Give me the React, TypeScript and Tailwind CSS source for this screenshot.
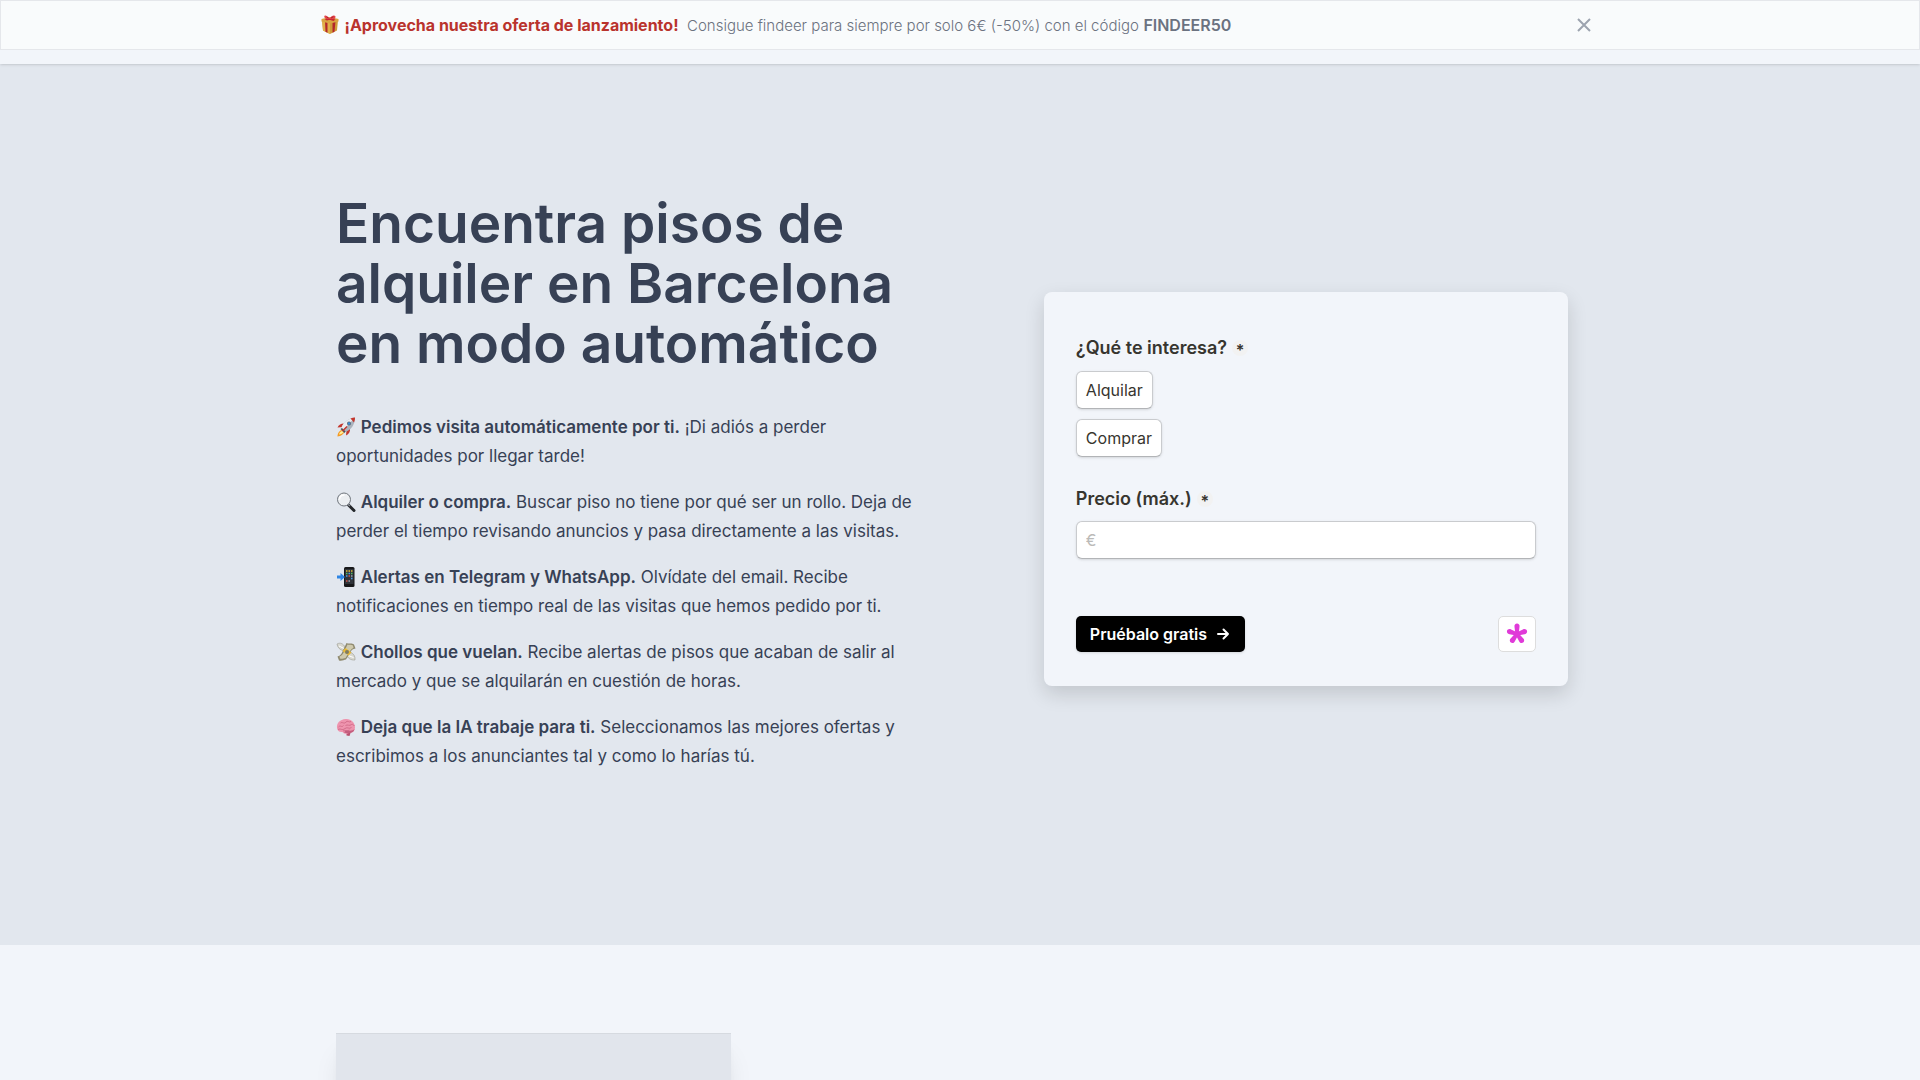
import type { ReactNode } from "react";

function Emoji({ label, children }: { label: string; children: ReactNode }) {
  return (
    <svg role="img" aria-label={label} viewBox="0 0 38 40" className="inline-block size-5 align-[-4px]">
      {children}
    </svg>
  );
}

function Gift() {
  return (
    <Emoji label="Regalo">
      <path d="M3 10 L19 14 L35 10 L33 31 L19 38 L5 31Z" fill="#cf9c3a" />
      <path d="M3 10 L19 14 V38 L5 31Z" fill="#e0b04a" />
      <path d="M9 11.500 L14 13 V35.500 L10 33.500Z M24 13 L30 11.500 L28 33.500 L24 35.500Z" fill="#b3262b" />
      <path d="M2 8 L19 4 L36 8 V13 L19 17 L2 13Z" fill="#d9a441" />
      <path d="M8 9 L24 5 L29 6.500 L13 11Z M14 5 L30 9 L26 12 L10 7Z" fill="#c8262f" />
      <path d="M18 7 C12 -1 6 0 8 5 C9 8 14 8 18 8 C24 9 31 7 30 3 C28 -1 22 1 18 7Z" fill="#e4454b" />
      <path d="M12 4 L16 6 M26 3.500 L21 6" stroke="#9a1b22" strokeWidth="1.500" />
    </Emoji>
  );
}

function Rocket() {
  return (
    <Emoji label="Cohete">
      <path d="M2 39 C2 31 7 26 13 25 L16 29 C14 35 9 38 2 39Z" fill="#f59a23" />
      <path d="M5 35 C6 31 9 28 12 28 L14 30 C12 33 9 35 5 35Z" fill="#fff09a" />
      <path d="M2 21 C5 14 11 12 17 13 L13 20 Z" fill="#c4362c" />
      <path d="M19 37 C25 34 28 29 27 22 L20 27Z" fill="#c4362c" />
      <path d="M9 25 C11 13 22 3 37 1 C37 15 29 27 15 31Z" fill="#aab3bd" />
      <path d="M9 25 C11 13 22 3 37 1 L12 28Z" fill="#e9edf1" />
      <path d="M28 3 C31 2 34 1 37 1 C37 5 36 8 35 11Z" fill="#c4362c" />
      <circle cx="25" cy="13" r="4" fill="#5c6773" />
      <circle cx="25" cy="13" r="2.500" fill="#3b8fd9" />
      <path d="M8 24 L16 32 L18 29 L11 22Z" fill="#4b535c" />
      <path d="M12 28 L21 19" stroke="#c4362c" strokeWidth="3" />
    </Emoji>
  );
}

function Magnifier() {
  return (
    <Emoji label="Lupa">
      <path d="M24 26 L35 37" stroke="#24272b" strokeWidth="6" strokeLinecap="round" />
      <path d="M22 24 L27 28" stroke="#8b9096" strokeWidth="3" />
      <circle cx="15" cy="15" r="13" fill="#eceff2" stroke="#70767d" strokeWidth="2" />
      <path d="M6 15 C6 9 10 6 16 6" fill="none" stroke="#fff" strokeWidth="3" />
    </Emoji>
  );
}

function Phone() {
  return (
    <Emoji label="Móvil con flecha">
      <rect x="15" y="0" width="21" height="40" rx="3" fill="#17181a" />
      <rect x="17" y="4" width="17" height="30" fill="#30343a" />
      <path d="M19 8h3M24 8h3M29 8h3" stroke="#e0b83c" strokeWidth="3" />
      <path d="M19 13h3M29 13h3" stroke="#4fbf65" strokeWidth="3" />
      <path d="M24 13h3M19 18h3M29 23h3" stroke="#4b9be8" strokeWidth="3" />
      <path d="M24 18h3M19 28h3" stroke="#d3524b" strokeWidth="3" />
      <path d="M29 18h3M24 28h3" stroke="#9ca3af" strokeWidth="3" />
      <path d="M1 17 H8 V12 L17 20 L8 28 V23 H1Z" fill="#2f86e4" />
    </Emoji>
  );
}

function Money() {
  return (
    <Emoji label="Dinero con alas">
      <path d="M1 4 C8 0 14 4 17 10 L13 17 C7 16 2 11 1 4Z" fill="#d8d8d0" stroke="#8f8e83" />
      <path d="M20 26 L29 21 C34 24 38 28 37 36 C29 37 22 32 20 26Z" fill="#d8d8d0" stroke="#8f8e83" />
      <path d="M5 8 L15 13 M23 27 L34 31" stroke="#fff" strokeWidth="2" />
      <path d="M20 2 C26 5 29 1 35 5 L38 13 C32 14 30 16 27 22 L19 35 C15 35 11 39 5 37 L2 29 C8 27 10 24 12 19Z" fill="#8f8a6f" />
      <path d="M22 5 C26 7 29 4 33 7 L34 12 C29 14 28 17 25 21 L18 32 C14 32 11 35 7 33 L6 29 C11 28 12 24 15 20Z" fill="#cfcaae" />
      <path d="M12 18 L18 12 L30 21 L24 27Z" fill="#e7ba35" />
      <circle cx="21" cy="20" r="4" fill="#7f7b61" />
    </Emoji>
  );
}

function Brain() {
  return (
    <Emoji label="Cerebro">
      <path d="M20 30 L28 32 L26 38 L20 37Z" fill="#b8506d" />
      <path d="M1 22 C0 12 7 5 18 4 C29 3 37 11 37 21 C37 28 32 32 26 31 C22 35 14 34 12 30 C6 31 2 28 1 22Z" fill="#ee94ae" />
      <path d="M15 31 C22 34 35 33 36 24 C32 29 23 27 17 28Z" fill="#c45e7e" />
      <path d="M4 20 C8 15 10 22 14 17 M8 12 C12 9 15 15 19 10 C22 6 25 12 29 9 M3 25 C9 22 11 28 17 23 C22 19 25 25 30 21 M18 17 C22 14 26 19 30 15 C33 13 34 18 36 17 M13 28 C17 25 22 29 26 26" fill="none" stroke="#c9607f" strokeWidth="1.500" />
    </Emoji>
  );
}

const features = [
  { icon: <Rocket />, title: "Pedimos visita automáticamente por ti.", text: "¡Di adiós a perder oportunidades por llegar tarde!" },
  { icon: <Magnifier />, title: "Alquiler o compra.", text: "Buscar piso no tiene por qué ser un rollo. Deja de perder el tiempo revisando anuncios y pasa directamente a las visitas." },
  { icon: <Phone />, title: "Alertas en Telegram y WhatsApp.", text: "Olvídate del email. Recibe notificaciones en tiempo real de las visitas que hemos pedido por ti." },
  { icon: <Money />, title: "Chollos que vuelan.", text: "Recibe alertas de pisos que acaban de salir al mercado y que se alquilarán en cuestión de horas." },
  { icon: <Brain />, title: "Deja que la IA trabaje para ti.", text: "Seleccionamos las mejores ofertas y escribimos a los anunciantes tal y como lo harías tú." },
];

function Required() {
  return <span className="flex size-4 items-center justify-center rounded-full bg-[#f2f2f2] pt-1 text-base leading-4">*</span>;
}

const control =
  "h-[38px] rounded-md border border-[#c9cbce] border-b-[#b2b4b7] bg-white px-[9px] text-base shadow-sm";

function SearchForm() {
  return (
    <form className="flex flex-col rounded-lg bg-[#f2f5fa] px-8 pt-[42px] pb-[34px] text-[#37352f] shadow-[0_8px_20px_rgba(0,0,0,0.14)]" onSubmit={(e) => e.preventDefault()}>
      <fieldset className="flex flex-col items-start gap-[10px]">
        <legend className="mb-[9px] flex items-center gap-[5px] text-lg leading-7 font-semibold">
          ¿Qué te interesa? <Required />
        </legend>
        <button type="button" className={control}>Alquilar</button>
        <button type="button" className={control}>Comprar</button>
      </fieldset>
      <label htmlFor="price" className="mt-7 flex items-center gap-[5px] text-lg leading-7 font-semibold">
        Precio (máx.) <Required />
      </label>
      <input id="price" placeholder="€" className={`mt-2 w-full placeholder:text-[#bbbab8] ${control}`} />
      <div className="mt-[57px] flex items-center justify-between">
        <button type="submit" className="flex h-9 items-center gap-2 rounded-[5px] bg-black px-[14px] text-base font-semibold text-white shadow-sm">
          Pruébalo gratis
          <svg viewBox="0 0 16 16" className="size-4" fill="none" stroke="currentColor" strokeWidth="2" strokeLinecap="round" strokeLinejoin="round" aria-hidden="true">
            <path d="M3 8h10M8.500 3.500 13 8l-4.500 4.500" />
          </svg>
        </button>
        <a href="#tally" aria-label="Tally" className="flex h-9 w-[38px] items-center justify-center rounded-[5px] border border-[#dddddd] bg-white">
          <svg viewBox="-11 -11 22 22" className="size-[22px]" fill="#e03ad8" aria-hidden="true">
            {[0, 72, 144, 216, 288].map((a) => (
              <path key={a} transform={`rotate(${a})`} d="M-1.500 1 L-2.500 -7 C-3 -9 -1.500 -10.500 0 -10.500 C1.500 -10.500 3 -9 2.500 -7 L1.500 1Z" />
            ))}
          </svg>
        </a>
      </div>
    </form>
  );
}

export default function App() {
  return (
    <div className="h-screen overflow-hidden bg-[#f2f5fa] font-['Inter',sans-serif] text-[#374155]">
      <header className="relative bg-[#f2f5fa] pb-[14px] shadow-sm">
        <div className="border border-[#e5e7eb] bg-[#f9fbfc]">
          <div className="mx-auto flex h-12 max-w-7xl items-center justify-between pr-[6px]">
            <p className="text-base text-[#6b7280]">
              <Gift /> <strong className="mr-1 font-bold text-[#b9332d]">¡Aprovecha nuestra oferta de lanzamiento!</strong>{" "}
              <span className="text-[15px] font-light">Consigue findeer para siempre por solo 6€ (-50%) con el código</span>{" "}
              <strong className="font-semibold">FINDEER50</strong>
            </p>
            <button type="button" aria-label="Cerrar" className="text-[#9ca3af]">
              <svg viewBox="0 0 20 20" className="size-5" fill="none" stroke="currentColor" strokeWidth="2" aria-hidden="true">
                <path d="m4 4 12 12M16 4 4 16" />
              </svg>
            </button>
          </div>
        </div>
      </header>
      <main>
        <section className="bg-[#e2e7ee] pt-[129px] pb-40">
          <div className="mx-auto flex max-w-7xl items-center justify-between px-4">
            <div className="w-1/2 pr-4 pb-[14px]">
              <h1 className="text-[55px] leading-[60px] font-semibold">
                Encuentra pisos de alquiler en Barcelona en modo automático
              </h1>
              <div className="mt-10 flex flex-col gap-[17px] text-[17px] leading-[29px]">
                {features.map((f) => (
                  <p key={f.title}>
                    {f.icon} <strong className="font-semibold">{f.title}</strong> {f.text}
                  </p>
                ))}
              </div>
            </div>
            <div className="mr-4 w-[42%]">
              <SearchForm />
            </div>
          </div>
        </section>
        <section className="mx-auto max-w-7xl px-4 pt-22">
          <div className="h-96 w-[395px] border-t border-[#d6dae0] bg-[#e1e5ec] shadow-xl" />
        </section>
      </main>
    </div>
  );
}
